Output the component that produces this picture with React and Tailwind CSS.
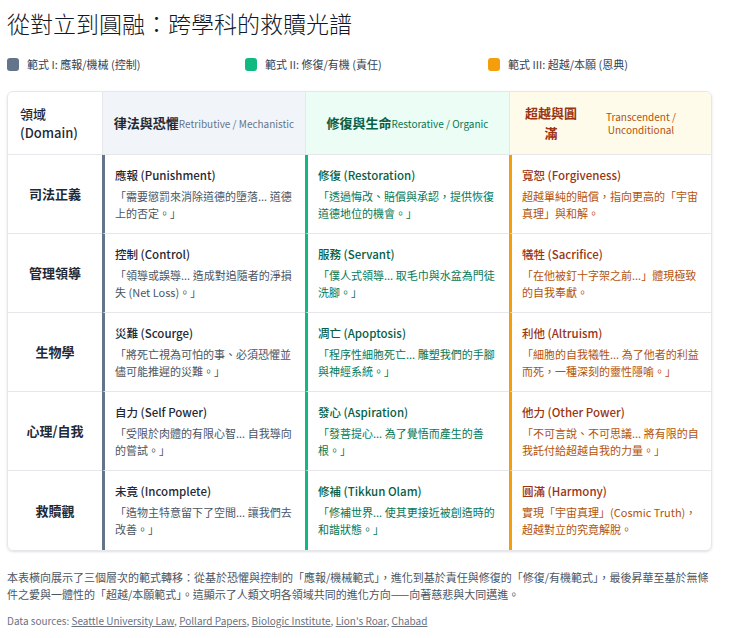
const F = { fontFamily: '"Noto Sans CJK TC","Noto Sans",sans-serif' };
const rows = [
  ["司法正義", ["應報 (Punishment)", "「需要懲罰來消除道德的墮落... 道德上的否定。」"], ["修復 (Restoration)", "「透過悔改、賠償與承認，提供恢復道德地位的機會。」"], ["寬恕 (Forgiveness)", "超越單純的賠償，指向更高的「宇宙真理」與和解。"]],
  ["管理領導", ["控制 (Control)", "「領導或誤導... 造成對追隨者的淨損失 (Net Loss)。」"], ["服務 (Servant)", "「僕人式領導... 取毛巾與水盆為門徒洗腳。」"], ["犧牲 (Sacrifice)", "「在他被釘十字架之前...」體現極致的自我奉獻。"]],
  ["生物學", ["災難 (Scourge)", "「將死亡視為可怕的事、必須恐懼並儘可能推遲的災難。」"], ["凋亡 (Apoptosis)", "「程序性細胞死亡... 雕塑我們的手腳與神經系統。」"], ["利他 (Altruism)", "「細胞的自我犧牲... 為了他者的利益而死，一種深刻的靈性隱喻。」"]],
  ["心理/自我", ["自力 (Self Power)", "「受限於肉體的有限心智... 自我導向的嘗試。」"], ["發心 (Aspiration)", "「發菩提心... 為了覺悟而產生的善根。」"], ["他力 (Other Power)", "「不可言說、不可思議... 將有限的自我託付給超越自我的力量。」"]],
  ["救贖觀", ["未竟 (Incomplete)", "「造物主特意留下了空間... 讓我們去改善。」"], ["修補 (Tikkun Olam)", "「修補世界... 使其更接近被創造時的和諧狀態。」"], ["圓滿 (Harmony)", "實現「宇宙真理」(Cosmic Truth)，超越對立的究竟解脫。"]],
];
const styles = [
  { bar: "border-l-[3px] border-l-[#64748b]", t: "text-[#1f2937]", b: "text-[#4b5563]" },
  { bar: "border-l-[3px] border-l-[#10b981]", t: "text-[#065f46]", b: "text-[#047857]" },
  { bar: "border-l-[3px] border-l-[#f59e0b]", t: "text-[#9a3412]", b: "text-[#b45309]" },
];
export default function App() {
  return (
    <div style={F} className="w-[740px] h-[638px] bg-white px-[7px] pt-[7px] text-[#1f2937] overflow-hidden">
      <h1 className="text-[23px] leading-[32px] text-[#111827] font-light">從對立到圓融：跨學科的救贖光譜</h1>
      <div className="flex items-center mt-[18px] text-[11px] text-[#374151] h-[14px]">
        <div className="flex items-center gap-[8px] w-[238px]"><span className="w-[12px] h-[13px] rounded-[3px] bg-[#64748b]" />範式 I: 應報/機械 (控制)</div>
        <div className="flex items-center gap-[8px] w-[243px] pl-[0px]"><span className="w-[12px] h-[13px] rounded-[3px] bg-[#10b981]" />範式 II: 修復/有機 (責任)</div>
        <div className="flex items-center gap-[8px]"><span className="w-[12px] h-[13px] rounded-[3px] bg-[#f59e0b]" />範式 III: 超越/本願 (恩典)</div>
      </div>
      <div className="mt-[20px] w-[705px] border border-[#e5e7eb] rounded-[6px] overflow-hidden shadow-sm grid grid-cols-[94px_203px_204px_204px]">
        <div className="h-[63px] px-[12px] flex items-center text-[13px] font-medium leading-[19px] border-b border-[#e5e7eb]">領域<br/>(Domain)</div>
        <div className="h-[63px] bg-[#f1f5f9] border-l border-[#e5e7eb] border-b flex items-center justify-center"><span className="text-[13px] font-bold text-[#1f2937]">律法與恐懼</span><span className="text-[10px] text-[#64748b]">Retributive / Mechanistic</span></div>
        <div className="h-[63px] bg-[#ecfdf5] border-l border-[#e5e7eb] border-b flex items-center justify-center"><span className="text-[13px] font-bold text-[#065f46]">修復與生命</span><span className="text-[10px] text-[#047857]">Restorative / Organic</span></div>
        <div className="h-[63px] bg-[#fffbeb] border-l border-[#e5e7eb] border-b flex items-center pl-[14px] gap-[18px]"><span className="text-[13px] font-bold text-[#9a3412] leading-[20px] w-[54px] shrink-0 text-center">超越與圓滿</span><span className="text-[10px] text-[#b45309] text-center leading-[13px] w-[90px] shrink-0">Transcendent /<br/>Unconditional</span></div>
        {rows.map((r, i) => (
          <>
            <div key={"d" + i} className={`h-[79px] flex items-center justify-center text-[13px] font-bold ${i < 4 ? "border-b border-[#e5e7eb]" : ""}`}>{r[0]}</div>
            {[r[1], r[2], r[3]].map((c, j) => (
              <div key={i + "-" + j} className={`h-[79px] ${styles[j].bar} pl-[10px] pr-[8px] pt-[12px] ${i < 4 ? "border-b border-b-[#e5e7eb]" : ""}`}>
                <div className={`text-[11.5px] font-medium leading-[16px] ${styles[j].t}`}>{c[0]}</div>
                <div className={`text-[11px] leading-[17px] mt-[5px] ${styles[j].b}`}>{c[1]}</div>
              </div>
            ))}
          </>
        ))}
      </div>
      <p className="mt-[18px] text-[11px] leading-[17px] text-[#4b5563] w-[705px]">本表橫向展示了三個層次的範式轉移：從基於恐懼與控制的「應報/機械範式」，進化到基於責任與修復的「修復/有機範式」，最後昇華至基於無條件之愛與一體性的「超越/本願範式」。這顯示了人類文明各領域共同的進化方向——向著慈悲與大同邁進。</p>
      <p className="mt-[10px] text-[10px] text-[#6b7280]">Data sources: <span className="underline">Seattle University Law</span>, <span className="underline">Pollard Papers</span>, <span className="underline">Biologic Institute</span>, <span className="underline">Lion's Roar</span>, <span className="underline">Chabad</span></p>
    </div>
  );
}
